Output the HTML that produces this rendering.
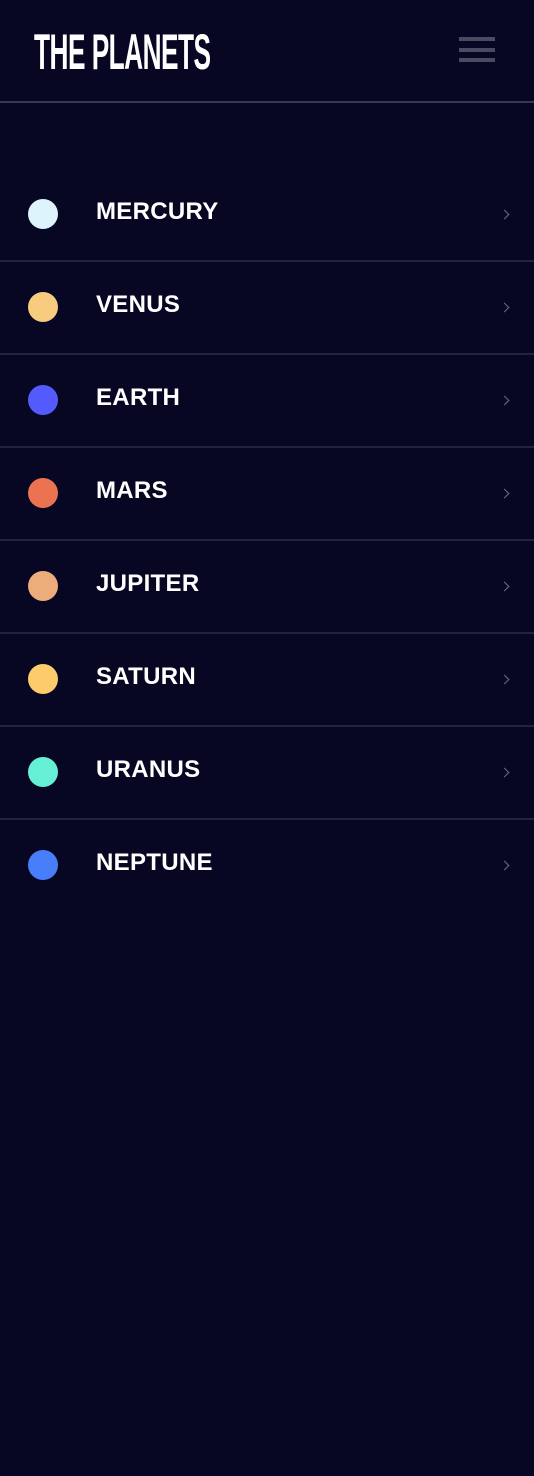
<!DOCTYPE html>
<html><head><style>
*{margin:0;padding:0;box-sizing:border-box}
body{width:534px;height:1476px;background:#070724;overflow:hidden;position:relative;font-family:"Liberation Sans",sans-serif}
.title{position:absolute;left:34px;top:27px;color:#fff;font-size:50px;font-weight:bold;line-height:50px;transform:scaleX(0.525);transform-origin:left top;letter-spacing:-1px;white-space:nowrap}
.bar{position:absolute;left:459px;width:36px;height:4px;background:#4a4a60}
.hdr{position:absolute;left:0;top:101px;width:534px;height:2px;background:#38384f}
.dot{position:absolute;left:28px;width:30px;height:30px;border-radius:50%}
.name{position:absolute;left:96px;color:#fff;font-weight:bold;font-size:24px;line-height:24px;letter-spacing:0.3px}
.chev{position:absolute;left:501px;width:7px;height:7px;border-top:1.5px solid #6a6a80;border-right:1.5px solid #6a6a80;transform:rotate(45deg)}
.sep{position:absolute;left:0;width:534px;height:2px;background:#23233a}
</style></head><body>
<div class="title">THE PLANETS</div>
<div class="bar" style="top:37px"></div>
<div class="bar" style="top:48px"></div>
<div class="bar" style="top:58px"></div>
<div class="hdr"></div>

<div class="dot" style="top:199px;background:#def4fc"></div><div class="name" style="top:200px">MERCURY</div><div class="chev" style="top:211px"></div><div class="sep" style="top:260px"></div>
<div class="dot" style="top:292px;background:#f7cc7f"></div><div class="name" style="top:293px">VENUS</div><div class="chev" style="top:304px"></div><div class="sep" style="top:353px"></div>
<div class="dot" style="top:385px;background:#545bfe"></div><div class="name" style="top:386px">EARTH</div><div class="chev" style="top:397px"></div><div class="sep" style="top:446px"></div>
<div class="dot" style="top:478px;background:#ec7351"></div><div class="name" style="top:479px">MARS</div><div class="chev" style="top:490px"></div><div class="sep" style="top:539px"></div>
<div class="dot" style="top:571px;background:#ecad7a"></div><div class="name" style="top:572px">JUPITER</div><div class="chev" style="top:583px"></div><div class="sep" style="top:632px"></div>
<div class="dot" style="top:664px;background:#fccb6b"></div><div class="name" style="top:665px">SATURN</div><div class="chev" style="top:676px"></div><div class="sep" style="top:725px"></div>
<div class="dot" style="top:757px;background:#65f0d5"></div><div class="name" style="top:758px">URANUS</div><div class="chev" style="top:769px"></div><div class="sep" style="top:818px"></div>
<div class="dot" style="top:850px;background:#497efa"></div><div class="name" style="top:851px">NEPTUNE</div><div class="chev" style="top:862px"></div>
</body></html>
